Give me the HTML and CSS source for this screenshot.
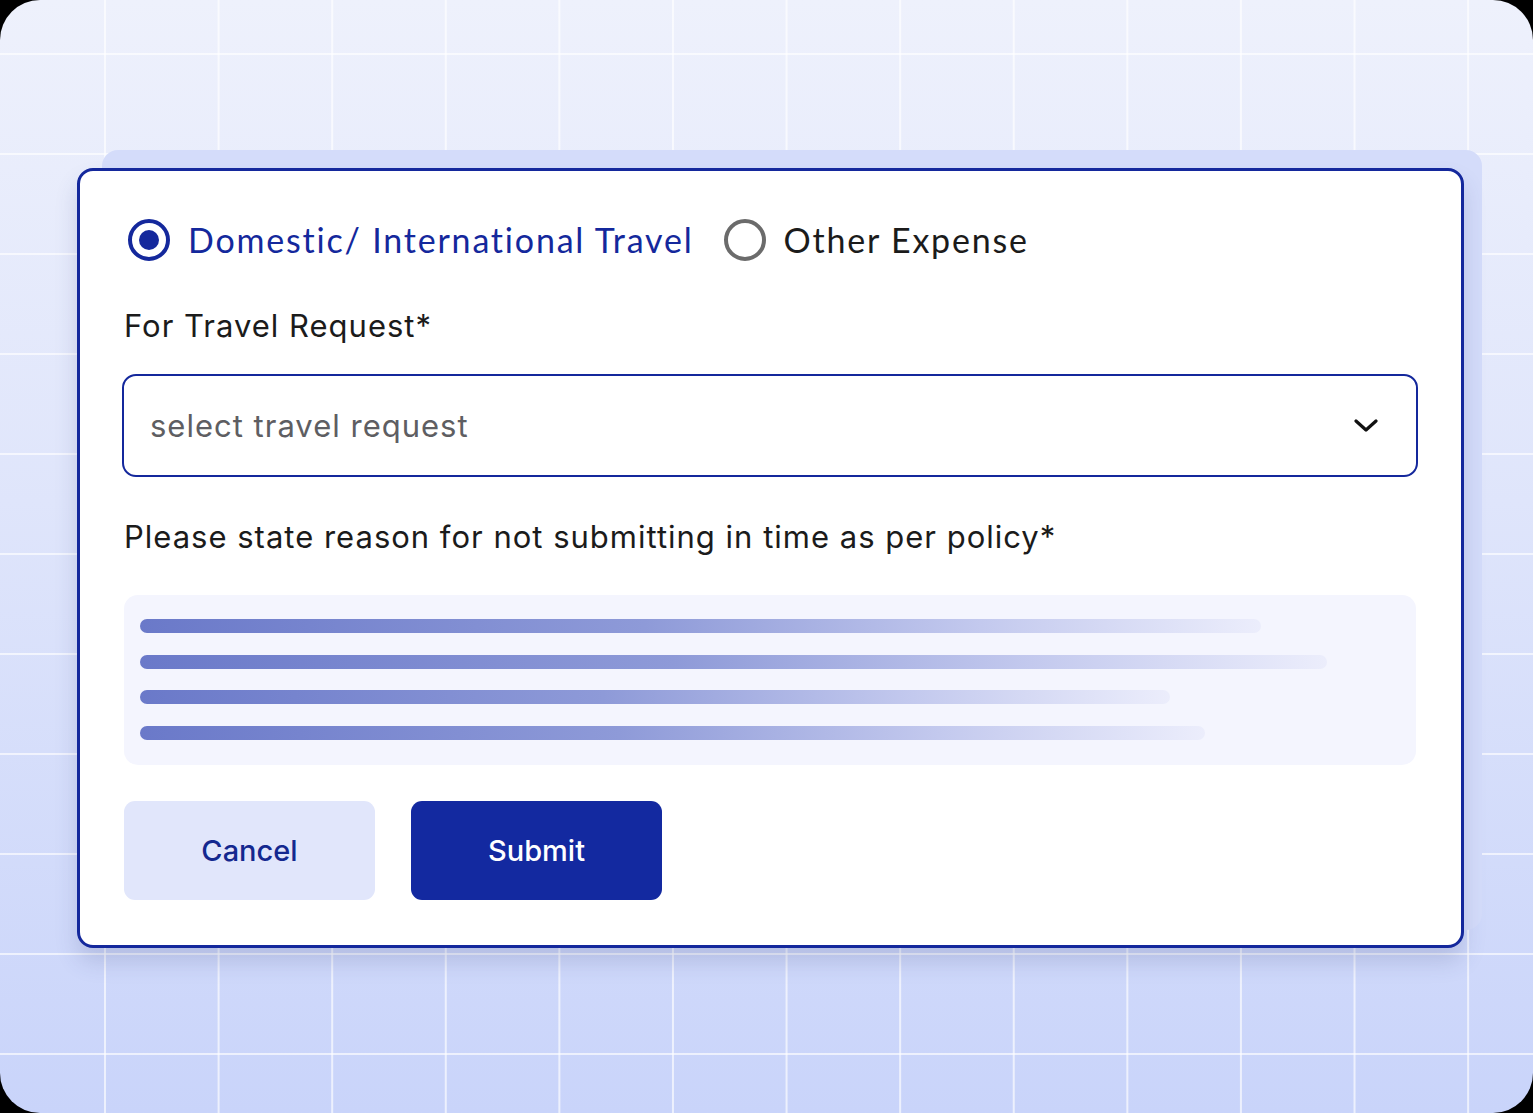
FILE: index.html
```html
<!DOCTYPE html>
<html lang="en">
<head>
    <meta charset="UTF-8">
    <meta name="viewport" content="width=device-width, initial-scale=1.0">
    <title>Expense Claim</title>
    <link rel="stylesheet" href="styles.css">
</head>
<body>
    <div class="frame">
        <div class="back-panel"></div>

        <form class="card">
            <div class="radio-row">
                <label class="radio checked">
                    <span class="radio-dot"></span>
                    <span>Domestic/ International Travel</span>
                </label>
                <label class="radio">
                    <span class="radio-dot"></span>
                    <span>Other Expense</span>
                </label>
            </div>

            <div class="field-label">For Travel Request*</div>
            <div class="select">
                <span class="placeholder">select travel request</span>
                <svg class="chevron" width="24" height="14" viewBox="0 0 24 14">
                    <path d="M2 2 L12 11 L22 2" fill="none" stroke="#111" stroke-width="3.2" stroke-linecap="round" stroke-linejoin="round"/>
                </svg>
            </div>

            <div class="field-label reason">Please state reason for not submitting in time as per policy*</div>
            <div class="textarea">
                <div class="line" style="width: 1121px"></div>
                <div class="line" style="width: 1187px"></div>
                <div class="line" style="width: 1030px"></div>
                <div class="line" style="width: 1065px"></div>
            </div>

            <div class="actions">
                <button type="button" class="btn btn-cancel">Cancel</button>
                <button type="button" class="btn btn-submit">Submit</button>
            </div>
        </form>
    </div>
</body>
</html>
```

FILE: styles.css
```css
* {
    box-sizing: border-box;
}

body {
    margin: 0;
    background: #000;
    font-family: Inter, "Liberation Sans", sans-serif;
}

.frame {
    position: relative;
    width: 1533px;
    height: 1113px;
    border-radius: 40px;
    overflow: hidden;
    padding: 168px 0 0 77px;
    background-color: #dfe5fb;
    background-image:
        linear-gradient(to right, rgba(255, 255, 255, 0.65) 2px, transparent 2px),
        linear-gradient(to bottom, rgba(255, 255, 255, 0.65) 2px, transparent 2px),
        linear-gradient(180deg, #eef1fc 0%, #dfe5fb 45%, #c9d4fa 100%);
    background-size: 113.6px 100px, 113.6px 100px, 100% 100%;
    background-position: 104px 53px, 104px 53px, 0 0;
}

.back-panel {
    position: absolute;
    left: 102px;
    top: 150px;
    width: 1380px;
    height: 780px;
    border-radius: 16px;
    background: #d4dcfa;
}

.card {
    position: relative;
    width: 1387px;
    height: 780px;
    border: 3px solid #14289c;
    border-radius: 16px;
    background: #fff;
    padding: 48px 44px 0 44px;
    box-shadow: 0 14px 22px rgba(60, 70, 130, 0.18);
}

.radio-row {
    display: flex;
    align-items: center;
    gap: 30px;
    margin-left: 4px;
    height: 42px;
}

.radio {
    display: flex;
    align-items: center;
    gap: 18px;
    font-family: Lato, "Open Sans", sans-serif;
    font-size: 34px;
    letter-spacing: 1.8px;
    line-height: 40px;
    color: #1b1b1b;
}

.radio-dot {
    width: 42px;
    height: 42px;
    border-radius: 50%;
    border: 4px solid #6b6b6b;
    display: flex;
    align-items: center;
    justify-content: center;
}

.radio.checked {
    color: #14289c;
}

.radio.checked .radio-dot {
    border-color: #14289c;
}

.radio.checked .radio-dot::after {
    content: "";
    width: 20px;
    height: 20px;
    border-radius: 50%;
    background: #14289c;
}

.field-label {
    margin-top: 45px;
    font-size: 31px;
    letter-spacing: 1px;
    color: #1b1b1b;
    line-height: 40px;
}

.select {
    margin-top: 28px;
    margin-left: -2px;
    width: 1296px;
    height: 103px;
    border: 2px solid #14289c;
    border-radius: 14px;
    display: flex;
    align-items: center;
    justify-content: space-between;
    padding: 0 38px 0 26px;
}

.placeholder {
    font-size: 31px;
    letter-spacing: 1px;
    color: #5e5e62;
}

.field-label.reason {
    margin-top: 40px;
}

.textarea {
    margin-top: 38px;
    width: 1292px;
    height: 170px;
    border-radius: 14px;
    background: #f4f5fe;
    padding: 24px 16px;
    display: flex;
    flex-direction: column;
    gap: 21.5px;
}

.line {
    height: 14px;
    border-radius: 7px;
    background: linear-gradient(90deg, #6a79c9 0%, #8e9ad8 45%, #c3c9ee 75%, rgba(230, 232, 250, 0.6) 100%);
}

.actions {
    display: flex;
    gap: 36px;
    margin-top: 36px;
}

.btn {
    width: 251px;
    height: 99px;
    border: none;
    border-radius: 11px;
    font-family: Inter, "Liberation Sans", sans-serif;
    font-size: 29px;
    font-weight: 500;
    cursor: pointer;
}

.btn-cancel {
    background: #e1e6fb;
    color: #14288f;
}

.btn-submit {
    background: #1329a0;
    color: #fff;
}
```
